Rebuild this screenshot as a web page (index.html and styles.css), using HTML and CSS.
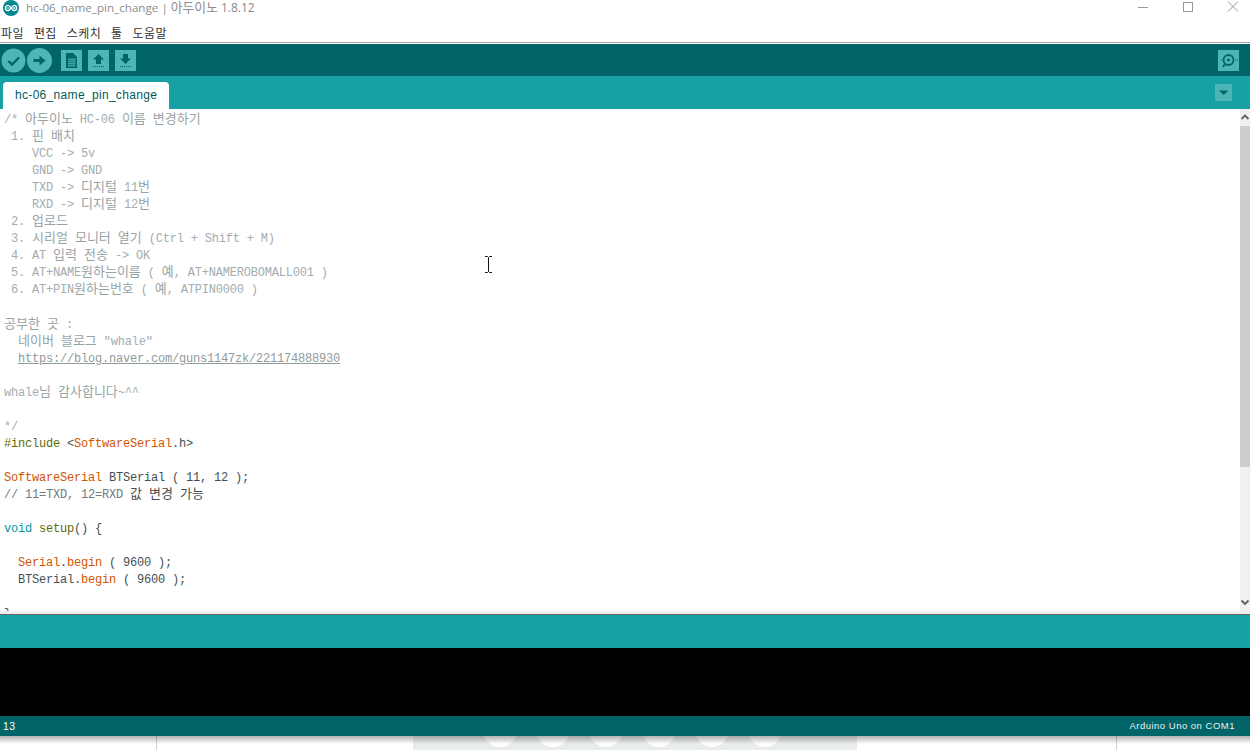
FILE: index.html
```html
<!DOCTYPE html>
<html lang="ko">
<head>
<meta charset="utf-8">
<title>hc-06_name_pin_change | 아두이노 1.8.12</title>
<link rel="stylesheet" href="styles.css">
</head>
<body>
<div class="window">
  <header class="titlebar">
    <svg class="logo" width="16" height="16" viewBox="0 0 16 16"><circle cx="8" cy="8" r="8" fill="#00878f"/><path d="M5 5.400a2.600 2.600 0 1 0 0 5.200c2 0 4-5.200 6-5.200a2.600 2.600 0 1 1 0 5.200c-2 0-4-5.200-6-5.200z" fill="none" stroke="#fff" stroke-width="1.300"/><path d="M3.700 8h2.200M10 8h2.200M11.100 6.900v2.200" stroke="#fff" stroke-width=".9"/></svg>
    <span class="title">hc-06_name_pin_change | <span class="title-k">아두이노</span> <span class="ver">1.8.12</span></span>
    <div class="winctl">
      <svg width="12" height="12" viewBox="0 0 12 12"><path d="M1 7.500h10" stroke="#999" fill="none"/></svg>
      <svg width="12" height="12" viewBox="0 0 12 12"><rect x="1.500" y="2.500" width="9" height="9" stroke="#999" fill="none"/></svg>
      <svg width="12" height="12" viewBox="0 0 12 12"><path d="M1 1.500l10 10M11 1.500l-10 10" stroke="#999" fill="none"/></svg>
    </div>
  </header>
  <nav class="menubar"><span>파일</span><span>편집</span><span>스케치</span><span>툴</span><span>도움말</span></nav>
  <div class="toolbar">
    <svg class="round" width="25" height="25" viewBox="0 0 25 25"><circle cx="12.500" cy="12.500" r="12" fill="#4db5b8"/><path d="M7.500 13l3.500 3.500 7-7" fill="none" stroke="#006468" stroke-width="2.400"/></svg>
    <svg class="round" width="25" height="25" viewBox="0 0 25 25"><circle cx="12.500" cy="12.500" r="12.500" fill="#4db5b8"/><path d="M6.500 11h6V7.500l6 5-6 5V14h-6z" fill="#006468"/></svg>
    <svg class="square first" width="21" height="21" viewBox="0 0 21 21"><rect width="21" height="21" fill="#4db5b8"/><path d="M5 3h7l4 4v11H5z" fill="#006468"/><path d="M7 9.500h7M7 11.500h7M7 13.500h7M7 15.500h7M8 8v9M10 8v9M12 8v9M14 8v9" stroke="#4db5b8" stroke-width=".7"/></svg>
    <svg class="square" width="21" height="21" viewBox="0 0 21 21"><rect width="21" height="21" fill="#4db5b8"/><path d="M10.500 4l5.500 5.500h-3V14H8V9.500H5z" fill="#006468"/><path d="M5 16.500h11" stroke="#006468" stroke-dasharray="1 1"/></svg>
    <svg class="square" width="21" height="21" viewBox="0 0 21 21"><rect width="21" height="21" fill="#4db5b8"/><path d="M10.500 14L5 8.500h3V4h5v4.500h3z" fill="#006468"/><path d="M5 16.500h11" stroke="#006468" stroke-dasharray="1 1"/></svg>
    <svg class="square serial" width="21" height="21" viewBox="0 0 21 21"><rect width="21" height="21" fill="#4db5b8"/><circle cx="10.500" cy="10" r="5" fill="none" stroke="#006468" stroke-width="1.800"/><circle cx="10.500" cy="10" r="1.500" fill="#006468"/><path d="M7 14l-2 3" stroke="#006468" stroke-width="2"/><path d="M3 10h1M17 10h1M19 10h1" stroke="#006468"/></svg>
  </div>
  <div class="tabbar">
    <div class="tab">hc-06_name_pin_change</div>
    <div class="tabmenu"><svg width="17" height="17" viewBox="0 0 17 17"><rect width="17" height="17" fill="#4db5b8"/><path d="M4 6.500h9.500L8.750 11z" fill="#006468"/></svg></div>
  </div>
  <main class="editor">
    <pre class="code"><span class="c">/* <span class="k">아두이노</span> HC-06 <span class="k">이름</span> <span class="k">변경하기</span>
 1. <span class="k">핀</span> <span class="k">배치</span>
    VCC -&gt; 5v
    GND -&gt; GND
    TXD -&gt; <span class="k">디지털</span> 11<span class="k">번</span>
    RXD -&gt; <span class="k">디지털</span> 12<span class="k">번</span>
 2. <span class="k">업로드</span>
 3. <span class="k">시리얼</span> <span class="k">모니터</span> <span class="k">열기</span> (Ctrl + Shift + M)
 4. AT <span class="k">입력</span> <span class="k">전송</span> -&gt; OK
 5. AT+NAME<span class="k">원하는이름</span> ( <span class="k">예</span>, AT+NAMEROBOMALL001 )
 6. AT+PIN<span class="k">원하는번호</span> ( <span class="k">예</span>, ATPIN0000 )

<span class="k">공부한</span> <span class="k">곳</span> :
  <span class="k">네이버</span> <span class="k">블로그</span> "whale"
  <span class="u">https://blog.naver.com/guns1147zk/221174888930</span>

whale<span class="k">님</span> <span class="k">감사합니다</span>~^^

*/</span>
<span class="g">#include</span> &lt;<span class="o">SoftwareSerial</span>.h&gt;

<span class="o">SoftwareSerial</span> BTSerial ( 11, 12 );
<span class="m">// 11=TXD, 12=RXD <span class="k">값</span> <span class="k">변경</span> <span class="k">가능</span></span>

<span class="t">void</span> <span class="g">setup</span>() {

  <span class="o">Serial</span>.<span class="o">begin</span> ( 9600 );
  BTSerial.<span class="o">begin</span> ( 9600 );

}</pre>
    <svg class="cursor" width="9" height="17" viewBox="0 0 9 17"><path d="M1 .5h2.500l1 1 1-1H8M4.500 1.500v14M1 16.500h2.500l1-1 1 1H8" fill="none" stroke="#111"/></svg>
    <div class="scrollbar">
      <svg class="arrow" width="10" height="17" viewBox="0 0 10 17"><path d="M1.500 10L5 6.500 8.500 10" fill="none" stroke="#606060" stroke-width="1.800"/></svg>
      <div class="track"><div class="thumb"></div></div>
      <svg class="arrow" width="10" height="17" viewBox="0 0 10 17"><path d="M1.500 6.500L5 10 8.500 6.500" fill="none" stroke="#606060" stroke-width="1.800"/></svg>
    </div>
  </main>
  <div class="divider"></div>
  <div class="message"></div>
  <div class="console"></div>
  <footer class="status"><span class="line">13</span><span class="board">Arduino Uno on COM1</span></footer>
  <div class="desk">
    <div class="side left"></div>
    <div class="strip"><i></i><i></i><i></i><i></i><i></i><i></i></div>
    <div class="side right"></div>
  </div>
</div>
</body>
</html>
```
FILE: styles.css
```css
* { box-sizing: border-box; }
html, body { margin: 0; padding: 0; background: #fff; }
.window { width: 1250px; height: 750px; overflow: hidden; display: flex; flex-direction: column; }

.titlebar { height: 24px; flex: none; display: flex; align-items: flex-start; padding: 0 0 0 3px; }
.logo { flex: none; }
.title { margin-left: 7px; font: 11.650px/16px "Open Sans", "Noto Sans CJK KR", sans-serif; color: #8c8c8c; }
.title-k { font-size: 12.800px; line-height: 10px; }
.ver { font-size: 12px; line-height: 10px; }
.winctl { margin-left: auto; display: flex; gap: 33px; padding-right: 11px; }

.menubar { height: 18px; flex: none; display: flex; gap: 10px; padding-left: 1px; font: 12px/17px "Noto Sans CJK KR", sans-serif; letter-spacing: .4px; color: #333; }

.toolbar { height: 34px; flex: none; display: flex; align-items: center; background: #006468; border-top: 1px solid #a5a5a5; box-shadow: inset 0 1px 0 #fff; padding: 2px 0 0 0; }
.round { margin-left: 1px; flex: none; }
.square { flex: none; margin-right: 6px; }
.square.first { margin-left: 9px; }
.square.serial { margin-left: auto; margin-right: 11px; }

.tabbar { height: 33px; flex: none; display: flex; align-items: flex-end; justify-content: space-between; background: #17a1a5; padding-left: 3px; }
.tab { width: 166px; height: 27px; background: #fff; border-radius: 4px 4px 0 0; padding-left: 12px; font: 12px/26px "Liberation Sans", sans-serif; letter-spacing: .32px; color: #005c5f; }
.tabmenu { height: 25px; padding-right: 18px; align-self: flex-start; margin-top: 8px; }
.tabmenu svg { display: block; }

.editor { height: 502px; flex: none; display: flex; position: relative; background: #fff; overflow: hidden; }
.code { flex: 1; margin: 0; padding: 3px 0 0 4px; font: 12px/17.050px "Liberation Mono", "Noto Sans CJK KR", monospace; letter-spacing: -.2px; color: #434f54; overflow: hidden; white-space: pre; }
.k { font-family: "Noto Sans CJK KR", sans-serif; font-size: 13px; line-height: 10px; letter-spacing: 0; }
.c { color: #a3adaf; }
.c .k { color: #98a3a5; }
.m { color: #6f7c80; }
.m .k { color: #434f54; }
.u { text-decoration: underline; color: #8f9a9c; }
.g { color: #5e6d03; }
.o { color: #d35400; }
.t { color: #00979c; }
.cursor { position: absolute; left: 484px; top: 147px; }

.scrollbar { width: 10px; flex: none; display: flex; flex-direction: column; background: #f0f0f0; }
.arrow { flex: none; display: block; }
.track { flex: 1; }
.thumb { height: 341px; background: #cdcdcd; }

.divider { height: 4px; flex: none; background: #eee; border-bottom: 1px solid #666; }
.message { height: 33px; flex: none; background: #17a1a5; }
.console { height: 68px; flex: none; background: #000; }
.status { height: 20px; flex: none; display: flex; justify-content: space-between; align-items: center; background: #006468; padding: 0 15px 0 3px; font: 10px/20px "Liberation Sans", sans-serif; color: #fff; }
.line { font-size: 10.500px; letter-spacing: .4px; }
.board { font-size: 9.500px; letter-spacing: .5px; color: #e8f2f2; }

.desk { flex: 1; display: flex; position: relative; background: #fff; }
.desk::after { content: ""; position: absolute; left: 0; right: 0; top: 0; height: 8px; background: linear-gradient(rgba(0,0,0,.3), rgba(0,0,0,0)); }
.side { width: 413px; }
.side.left { background: linear-gradient(90deg, #fff 156px, #d0d0d0 156px, #d0d0d0 157px, #fff 157px); }
.side.right { flex: 1; background: linear-gradient(90deg, #fff 259px, #d0d0d0 259px, #d0d0d0 260px, #fff 260px); }
.strip { width: 444px; background: #e9eced; display: flex; padding-left: 70px; gap: 19px; overflow: hidden; }
.strip i { width: 34px; height: 34px; flex: none; margin-top: -23px; border-radius: 50%; background: #fff; }
```
